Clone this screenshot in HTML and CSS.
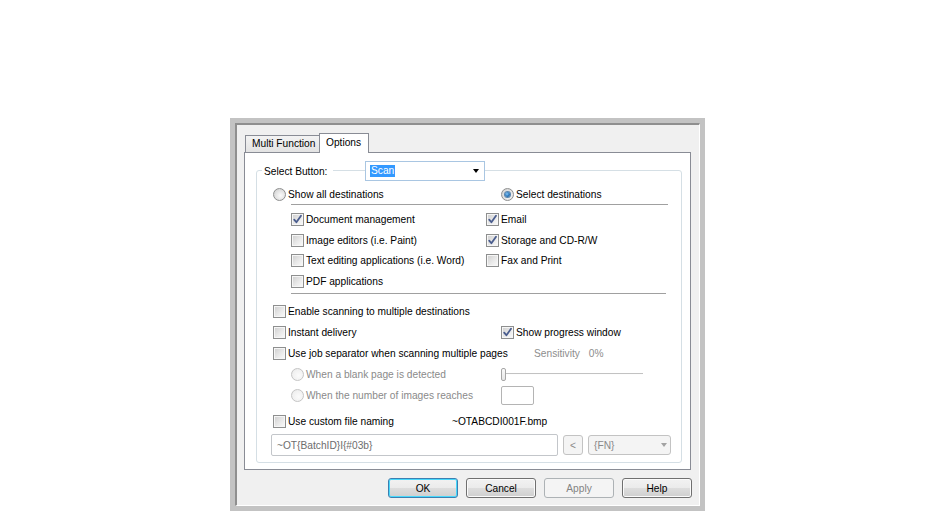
FILE: index.html
```html
<!DOCTYPE html>
<html>
<head>
<meta charset="utf-8">
<link rel="stylesheet" href="styles.css">
</head>
<body>
<div class="window">
  <div class="frame">
    <div class="tabs">
      <div class="tab inactive">Multi Function</div>
      <div class="tab active">Options</div>
    </div>
    <div class="panel">
      <div class="group">
        <div class="ghead">
          <span class="glabel">Select Button:</span>
          <div class="combo"><span class="sel">Scan</span><span class="arrow"></span></div>
        </div>

        <div class="line radio-row c228">
          <div class="opt"><span class="rd"></span>Show all destinations</div>
          <div class="opt"><span class="rd on"></span>Select destinations</div>
        </div>
        <div class="sep sep1"></div>

        <div class="checks">
          <div class="opt"><span class="cb"><svg viewBox="0 0 11 11"><path d="M2.2 5.6 L4.4 8.3 L9 1.8"/></svg></span>Document management</div>
          <div class="opt"><span class="cb"><svg viewBox="0 0 11 11"><path d="M2.2 5.6 L4.4 8.3 L9 1.8"/></svg></span>Email</div>
          <div class="opt"><span class="cb"></span>Image editors (i.e. Paint)</div>
          <div class="opt"><span class="cb"><svg viewBox="0 0 11 11"><path d="M2.2 5.6 L4.4 8.3 L9 1.8"/></svg></span>Storage and CD-R/W</div>
          <div class="opt"><span class="cb"></span>Text editing applications (i.e. Word)</div>
          <div class="opt"><span class="cb"></span>Fax and Print</div>
          <div class="opt"><span class="cb"></span>PDF applications</div>
        </div>
        <div class="sep sep2"></div>

        <div class="line first c228">
          <div class="opt"><span class="cb"></span>Enable scanning to multiple destinations</div>
        </div>
        <div class="line c228">
          <div class="opt"><span class="cb"></span>Instant delivery</div>
          <div class="opt"><span class="cb"><svg viewBox="0 0 11 11"><path d="M2.2 5.6 L4.4 8.3 L9 1.8"/></svg></span>Show progress window</div>
        </div>
        <div class="line c261">
          <div class="opt"><span class="cb"></span>Use job separator when scanning multiple pages</div>
          <div class="sens"><span>Sensitivity</span><span>0%</span></div>
        </div>
        <div class="line sub c210">
          <div class="opt dis"><span class="rd off"></span>When a blank page is detected</div>
          <div class="slider"><span class="thumb"></span></div>
        </div>
        <div class="line sub c210">
          <div class="opt dis"><span class="rd off"></span>When the number of images reaches</div>
          <div class="numbox"></div>
        </div>
        <div class="line naming c179">
          <div class="opt"><span class="cb"></span>Use custom file naming</div>
          <div class="preview">~OTABCDI001F.bmp</div>
        </div>
        <div class="fieldrow">
          <div class="field">~OT{BatchID}I{#03b}</div>
          <div class="small-btn">&lt;</div>
          <div class="fn"><span>{FN}</span><span class="arrow gray"></span></div>
        </div>
      </div>
    </div>
    <div class="buttons">
      <div class="btn ok">OK</div>
      <div class="btn">Cancel</div>
      <div class="btn disabled">Apply</div>
      <div class="btn">Help</div>
    </div>
  </div>
</div>
</body>
</html>
```

FILE: styles.css
```css
html, body {
  margin: 0;
  padding: 0;
  background: #fff;
}
body {
  font-family: "Liberation Sans", Arial, sans-serif;
  font-size: 10.2px;
  line-height: 13px;
  color: #000;
}
.window {
  margin: 118px 0 0 230px;
  width: 475px;
  box-sizing: border-box;
  border: 5px solid #c3c3c3;
}
.frame {
  border-top: 2px solid #8f8f8f;
  border-left: 2px solid #8f8f8f;
  border-right: 1px solid #fff;
  border-bottom: 1px solid #fff;
  background: #f0f0f0;
  padding: 8px 8px 7px 7px;
}
.tabs {
  display: flex;
  align-items: flex-end;
  height: 19px;
  padding-left: 1px;
}
.tab {
  box-sizing: border-box;
  border: 1px solid #898c95;
  border-bottom: none;
  padding: 0 6px;
  white-space: nowrap;
}
.tab.inactive {
  width: 74px;
  height: 17px;
  line-height: 16px;
  padding: 0 4px 0 6px;
  border-right: none;
  background: linear-gradient(#f3f3f3, #e3e3e3);
  overflow: hidden;
}
.tab.active {
  width: 50px;
  height: 20px;
  line-height: 18px;
  background: #fff;
  margin-bottom: -1px;
  position: relative;
  z-index: 1;
}
.panel {
  background: #fff;
  border: 1px solid #898c95;
  padding: 17px 8px 6px 11px;
}
.group {
  border: 1px solid #d5dfe5;
  border-radius: 3px;
  padding-bottom: 6px;
}
.ghead {
  display: flex;
  align-items: center;
  height: 20px;
  margin-top: -10px;
  padding-left: 5px;
}
.glabel {
  width: 71px;
  box-sizing: border-box;
  padding-left: 2px;
  background: #fff;
}
.combo {
  margin-left: 32px;
  width: 120px;
  height: 20px;
  box-sizing: border-box;
  border: 1px solid #a9c6e2;
  background: #fff;
  display: flex;
  align-items: center;
  padding: 0 4px 0 4px;
}
.sel {
  background: #3399ff;
  color: #fff;
  padding: 0 1px;
  line-height: 12px;
}
.arrow {
  margin-left: auto;
  margin-right: 1px;
  width: 0;
  height: 0;
  border-left: 3.5px solid transparent;
  border-right: 3.5px solid transparent;
  border-top: 4px solid #000;
}
.arrow.gray {
  border-top-color: #a2a2a2;
  margin-right: 3px;
}

.line {
  display: grid;
  align-items: center;
  height: 21px;
  padding-left: 16px;
}
.radio-row {
  height: 16px;
  margin-top: 5px;
}
.c228 { grid-template-columns: 228px auto; }
.c261 { grid-template-columns: 261px auto; }
.c210 { grid-template-columns: 210px auto; }
.c179 { grid-template-columns: 179px auto; }
.line.sub { padding-left: 34px; }
.line.first { margin-top: 7px; }
.line.naming { margin-top: 5px; }

.opt {
  display: flex;
  align-items: center;
  gap: 2px;
  white-space: nowrap;
}
.opt.dis { color: #8a8a8a; }

.cb {
  width: 13px;
  height: 13px;
  flex: none;
  box-sizing: border-box;
  border: 1px solid #8e8f8f;
  background: linear-gradient(135deg, #cdcdcd 0%, #e9e9e9 55%, #fbfbfb 100%);
  box-shadow: inset 0 0 0 1px #f6f6f6;
  display: flex;
}
.cb svg {
  width: 11px;
  height: 11px;
}
.cb path {
  fill: none;
  stroke: #4a5d8e;
  stroke-width: 1.8;
  stroke-linecap: round;
  stroke-linejoin: round;
}
.rd {
  width: 13px;
  height: 13px;
  flex: none;
  box-sizing: border-box;
  border-radius: 50%;
  border: 1px solid #8e8f8f;
  background: radial-gradient(circle at 60% 60%, #fbfbfb 0%, #e6e6e6 45%, #c9c9c9 100%);
  display: flex;
  align-items: center;
  justify-content: center;
}
.rd.on::after {
  content: "";
  width: 5px;
  height: 5px;
  border-radius: 50%;
  background: radial-gradient(circle at 40% 40%, #8cc8f5 0%, #2b79be 50%, #174a7c 100%);
  box-shadow: 0 0 0 1px #5b85ad;
}
.rd.off {
  border-color: #c5c5c5;
  background: radial-gradient(circle at 60% 60%, #fbfbfb 0%, #f1f1f1 60%, #e4e4e4 100%);
}

.sep {
  height: 1px;
  background: #a0a0a0;
  margin-left: 34px;
}
.sep1 { width: 377px; margin-top: 2px; }
.sep2 { width: 375px; margin-top: 1px; }

.checks {
  display: grid;
  grid-template-columns: 195px auto;
  grid-template-rows: 21px 20px 21px 21px;
  align-items: center;
  padding-left: 34px;
  margin-top: 4px;
}

.sens {
  display: flex;
  gap: 9px;
  color: #8d8d8d;
}
.slider {
  width: 142px;
  height: 13px;
  background:
    linear-gradient(#c2c2c2, #c2c2c2) 0 5px / 100% 1px no-repeat,
    linear-gradient(#fdfdfd, #fdfdfd) 0 6px / 100% 1px no-repeat;
  display: flex;
}
.thumb {
  width: 5px;
  height: 13px;
  box-sizing: border-box;
  border: 1px solid #a6a6a6;
  border-radius: 2px;
  background: linear-gradient(#fafafa, #e6e6e6);
}
.numbox {
  width: 33px;
  height: 19px;
  box-sizing: border-box;
  border: 1px solid #b4b4b4;
  border-radius: 2px;
  background: #fff;
}
.preview { white-space: nowrap; }

.fieldrow {
  display: flex;
  align-items: center;
  gap: 5px;
  height: 22px;
  margin-top: 2px;
  padding-left: 14px;
}
.field {
  width: 287px;
  height: 22px;
  box-sizing: border-box;
  border: 1px solid #c3c6ca;
  border-radius: 2px;
  background: #fff;
  color: #6d6d6d;
  padding-left: 5px;
  display: flex;
  align-items: center;
}
.small-btn {
  width: 20px;
  height: 20px;
  box-sizing: border-box;
  border: 1px solid #c3c3c3;
  border-radius: 3px;
  background: #f4f4f4;
  color: #8a8a8a;
  display: flex;
  align-items: center;
  justify-content: center;
}
.fn {
  width: 83px;
  height: 20px;
  box-sizing: border-box;
  border: 1px solid #c3c3c3;
  border-radius: 3px;
  background: #f4f4f4;
  color: #8a8a8a;
  display: flex;
  align-items: center;
  padding-left: 5px;
}

.buttons {
  display: flex;
  justify-content: flex-end;
  gap: 8px;
  margin-top: 8px;
  margin-right: -1px;
}
.btn {
  width: 70px;
  height: 20px;
  box-sizing: border-box;
  border: 1px solid #707070;
  border-radius: 3px;
  background: linear-gradient(#f2f2f2 0%, #ebebeb 50%, #dddddd 51%, #cfcfcf 100%);
  box-shadow: inset 0 0 0 1px #fbfbfb;
  display: flex;
  align-items: center;
  justify-content: center;
}
.btn.ok {
  border-color: #3c7fb1;
  box-shadow: inset 0 0 0 1px #48d8fb;
  background: linear-gradient(#f2f2f2 0%, #ebebeb 50%, #dddddd 51%, #cfcfcf 100%);
}
.btn.disabled {
  border-color: #adb2b5;
  background: #f4f4f4;
  box-shadow: none;
  color: #838383;
}
```
